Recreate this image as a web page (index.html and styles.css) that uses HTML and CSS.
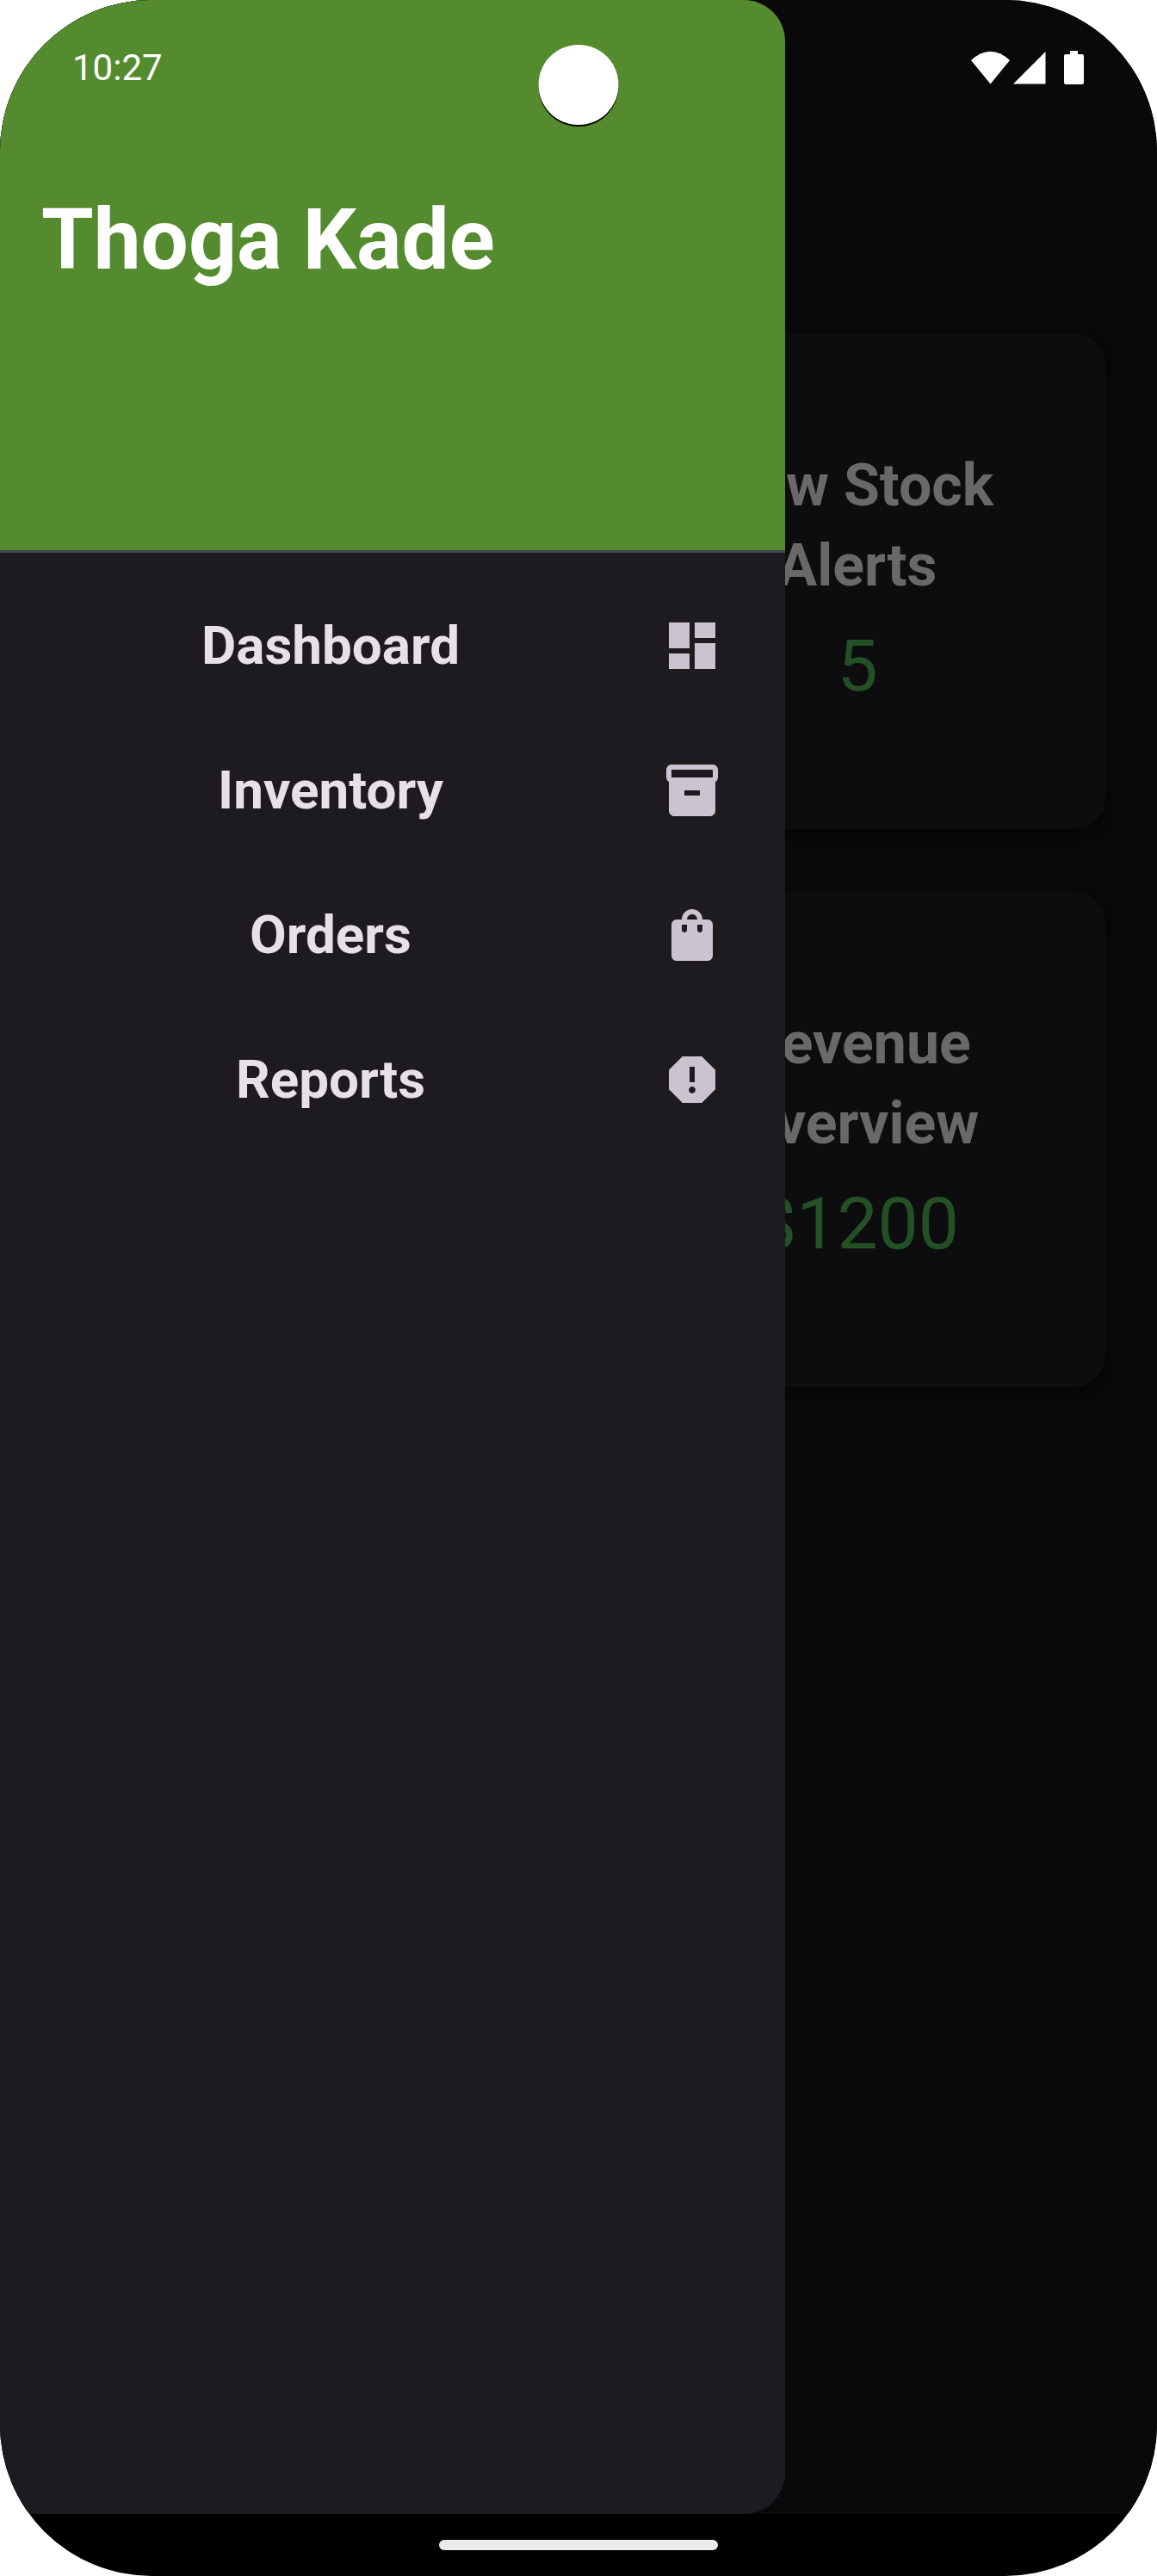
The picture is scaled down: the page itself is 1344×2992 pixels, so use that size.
FILE: index.html
```html
<!DOCTYPE html>
<html lang="en">
<head>
  <meta charset="utf-8">
  <meta name="viewport" content="width=device-width, initial-scale=1">
  <title>Thoga Kade</title>
  <link rel="stylesheet" href="styles.css">
</head>
<body>
  <div class="screen">
    <div class="stage">
      <main class="dashboard">
        <section class="card">
          <h2 class="card-title">Low Stock Alerts</h2>
          <p class="card-value">5</p>
        </section>
        <section class="card">
          <h2 class="card-title">Revenue Overview</h2>
          <p class="card-value">$1200</p>
        </section>
      </main>

      <aside class="drawer">
        <header class="drawer-header">
          <h1 class="drawer-title">Thoga Kade</h1>
        </header>
        <nav class="menu">
          <a class="menu-item" href="#dashboard">
            <span class="menu-label">Dashboard</span>
            <svg class="menu-icon" viewBox="0 0 24 24" aria-hidden="true"><path d="M3 13h8V3H3v10zm0 8h8v-6H3v6zm10 0h8V11h-8v10zm0-18v6h8V3h-8z"/></svg>
          </a>
          <a class="menu-item" href="#inventory">
            <span class="menu-label">Inventory</span>
            <svg class="menu-icon" viewBox="0 0 24 24" aria-hidden="true"><path d="M20 2H4c-1 0-2 .9-2 2v3.01c0 .72.43 1.34 1 1.69V20c0 1.1 1.1 2 2 2h14c.9 0 2-.9 2-2V8.7c.57-.35 1-.97 1-1.69V4c0-1.1-1-2-2-2zm-5 12H9v-2h6v2zm5-7H4V4h16v3z"/></svg>
          </a>
          <a class="menu-item" href="#orders">
            <span class="menu-label">Orders</span>
            <svg class="menu-icon" viewBox="0 0 24 24" aria-hidden="true"><path d="M18 6h-2c0-2.21-1.79-4-4-4S8 3.79 8 6H6c-1.1 0-2 .9-2 2v12c0 1.1.9 2 2 2h12c1.1 0 2-.9 2-2V8c0-1.1-.9-2-2-2zm-8 4c0 .55-.45 1-1 1s-1-.45-1-1V8h2v2zm2-6c1.1 0 2 .9 2 2h-4c0-1.1.9-2 2-2zm4 6c0 .55-.45 1-1 1s-1-.45-1-1V8h2v2z"/></svg>
          </a>
          <a class="menu-item" href="#reports">
            <span class="menu-label">Reports</span>
            <svg class="menu-icon" viewBox="0 0 24 24" aria-hidden="true"><path d="M15.73 3H8.27L3 8.27v7.46L8.27 21h7.46L21 15.73V8.27L15.73 3zM12 17.3c-.72 0-1.3-.58-1.3-1.3s.58-1.3 1.3-1.3 1.3.58 1.3 1.3-.58 1.3-1.3 1.3zm1-4.3h-2V7h2v6z"/></svg>
          </a>
        </nav>
      </aside>

      <div class="status-bar">
        <time class="clock">10:27</time>
        <svg class="status-icons" viewBox="0 0 132 40" aria-hidden="true">
          <path d="M0 11Q22.500-9.500 45 11L22.500 38.500z"/>
          <path d="M49 38.500L86.500 1V38.500z"/>
          <path d="M115 0h9v4h5q2 0 2 2v31q0 2-2 2h-19q-2 0-2-2v-31q0-2 2-2h5z"/>
        </svg>
      </div>
    </div>

    <footer class="gesture-bar">
      <div class="gesture-handle"></div>
    </footer>

    <div class="camera"></div>
  </div>
</body>
</html>
```
FILE: styles.css
```css
* {
  box-sizing: border-box;
}

body {
  margin: 0;
  background: #fff;
  font-family: Roboto, "Liberation Sans", sans-serif;
}

h1,
h2,
p {
  margin: 0;
}

.screen {
  position: relative;
  display: flex;
  flex-direction: column;
  min-height: 100vh;
  overflow: hidden;
  border-radius: 176px;
  background: #000;
}

/* Dashboard, drawer and status bar share one grid cell and stack in order. */
.stage {
  flex: 1;
  display: grid;
  grid-template: 1fr / 1fr;
  background: #09090b;
}

.dashboard,
.drawer,
.status-bar {
  grid-area: 1 / 1;
}

.dashboard {
  display: grid;
  grid-template-columns: 1fr 1fr;
  align-content: start;
  gap: 72px;
  padding: 387px 60px 60px;
}

.card {
  grid-column: 2;
  display: flex;
  flex-direction: column;
  justify-content: center;
  gap: 12px;
  aspect-ratio: 1;
  padding: 48px;
  border-radius: 36px;
  background: #0d0d0f;
  box-shadow: 0 6px 12px #060607;
  text-align: center;
}

.card-title {
  color: #6a686b;
  font-size: 68px;
  font-weight: 700;
  line-height: 93px;
}

.card-value {
  color: #235024;
  font-size: 84px;
  line-height: 116px;
}

.drawer {
  width: 100%;
  max-width: 912px;
  overflow: hidden;
  border-radius: 0 48px 48px 0;
  background: #1d1b20;
}

.drawer-header {
  min-height: 642px;
  padding: 223px 48px 48px;
  border-bottom: 3px solid #49454f;
  background: #558b2f;
}

.drawer-title {
  color: #fff;
  font-size: 98px;
  font-weight: 700;
  line-height: 112px;
}

.menu {
  padding: 24px 0;
}

.menu-item {
  display: flex;
  align-items: center;
  min-height: 168px;
  padding-right: 72px;
  color: #e6e0e9;
  text-decoration: none;
}

.menu-label {
  flex: 1;
  font-size: 62px;
  font-weight: 700;
  line-height: 72px;
  text-align: center;
}

.menu-icon {
  width: 72px;
  height: 72px;
  fill: #cac4d0;
}

.status-bar {
  display: flex;
  align-items: center;
  justify-content: space-between;
  align-self: start;
  height: 158px;
  padding: 0 84px;
}

.clock {
  color: #fff;
  font-size: 42px;
  line-height: 48px;
}

.status-icons {
  width: 132px;
  height: 40px;
  fill: #fff;
}

.gesture-bar {
  display: flex;
  align-items: center;
  justify-content: center;
  height: 72px;
}

.gesture-handle {
  width: 324px;
  height: 12px;
  border-radius: 6px;
  background: #ebebeb;
}

.camera {
  position: absolute;
  top: 52px;
  left: 50%;
  width: 93px;
  height: 93px;
  border-radius: 50%;
  background: #fff;
  box-shadow: 0 2px 0 #000;
  transform: translateX(-50%);
}
```
